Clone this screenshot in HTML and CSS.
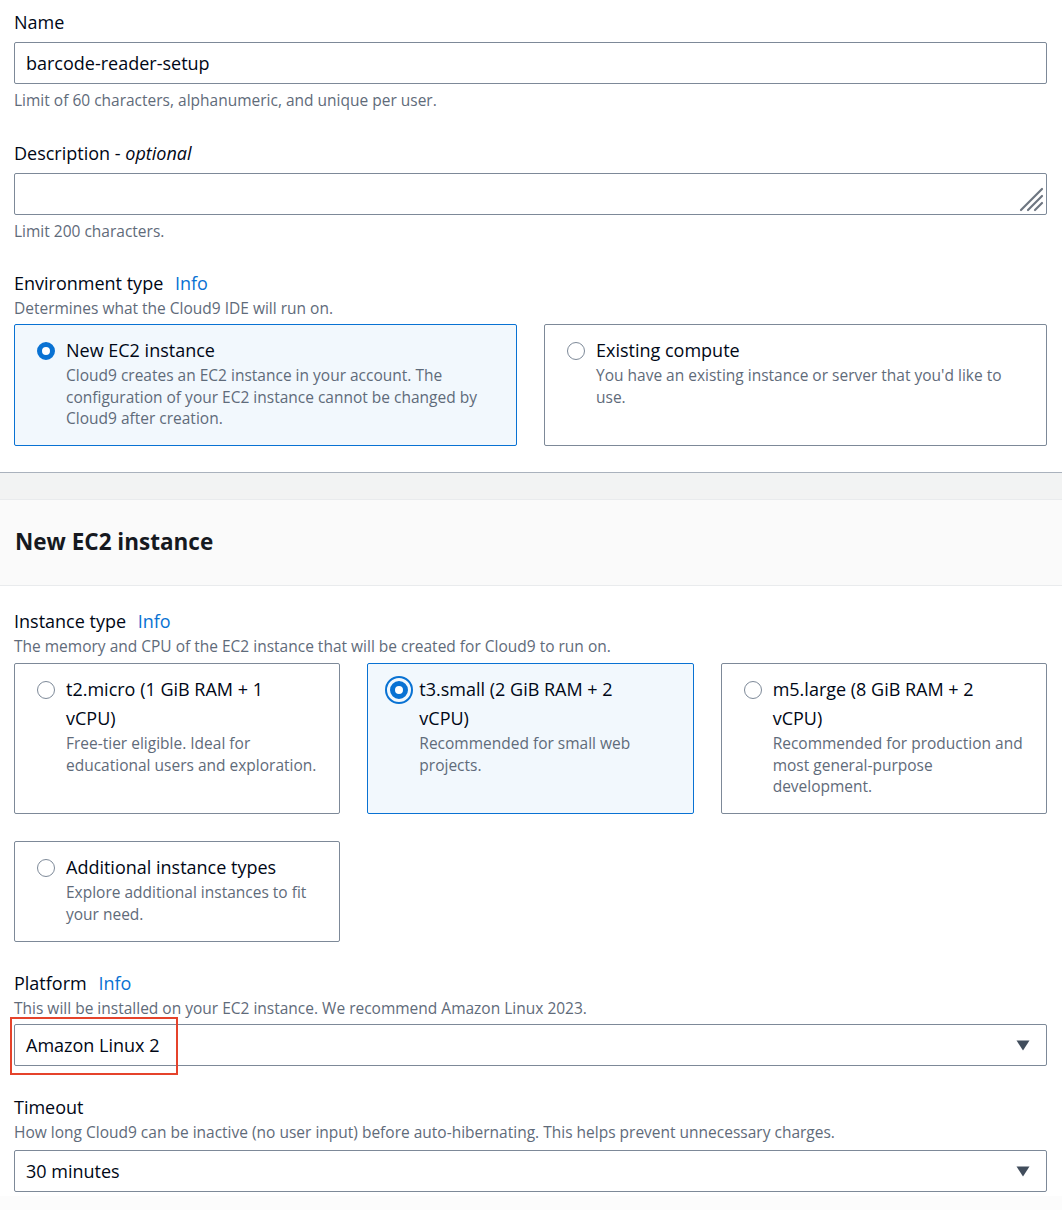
FILE: index.html
```html
<!DOCTYPE html>
<html lang="en">
<head>
<meta charset="utf-8">
<title>Create environment</title>
<link rel="stylesheet" href="styles.css">
</head>
<body>
<div class="page">
  <section class="top">
    <div class="field f-name">
      <div class="label">Name</div>
      <div class="input"><span class="value">barcode-reader-setup</span></div>
      <div class="hint">Limit of 60 characters, alphanumeric, and unique per user.</div>
    </div>

    <div class="field f-desc">
      <div class="label">Description - <i>optional</i></div>
      <div class="textarea">
        <svg class="grip" width="28" height="28" viewBox="0 0 28 28" aria-hidden="true">
          <g stroke="#6e7681" stroke-width="2.2" stroke-linecap="round">
            <line x1="4" y1="25" x2="25" y2="4"/>
            <line x1="11" y1="25" x2="25" y2="11"/>
            <line x1="18" y1="25" x2="25" y2="18"/>
          </g>
        </svg>
      </div>
      <div class="hint">Limit 200 characters.</div>
    </div>

    <div class="field f-env">
      <div class="label">Environment type <a class="info">Info</a></div>
      <div class="desc">Determines what the Cloud9 IDE will run on.</div>
      <div class="tiles tiles-2">
        <div class="tile selected">
          <span class="radio checked"></span>
          <div class="tile-text">
            <div class="tile-title">New EC2 instance</div>
            <div class="tile-desc">Cloud9 creates an EC2 instance in your account. The configuration of your EC2 instance cannot be changed by Cloud9 after creation.</div>
          </div>
        </div>
        <div class="tile">
          <span class="radio"></span>
          <div class="tile-text">
            <div class="tile-title">Existing compute</div>
            <div class="tile-desc">You have an existing instance or server that you'd like to use.</div>
          </div>
        </div>
      </div>
    </div>
  </section>

  <div class="band"></div>

  <header class="cheader">
    <h2>New EC2 instance</h2>
  </header>

  <section class="cbody">
    <div class="field f-itype">
      <div class="label">Instance type <a class="info">Info</a></div>
      <div class="desc">The memory and CPU of the EC2 instance that will be created for Cloud9 to run on.</div>
      <div class="tiles tiles-3">
        <div class="tile tall">
          <span class="radio"></span>
          <div class="tile-text">
            <div class="tile-title">t2.micro (1 GiB RAM + 1 vCPU)</div>
            <div class="tile-desc">Free-tier eligible. Ideal for educational users and exploration.</div>
          </div>
        </div>
        <div class="tile tall selected">
          <span class="radio checked focused"></span>
          <div class="tile-text">
            <div class="tile-title">t3.small (2 GiB RAM + 2 vCPU)</div>
            <div class="tile-desc">Recommended for small web projects.</div>
          </div>
        </div>
        <div class="tile tall">
          <span class="radio"></span>
          <div class="tile-text">
            <div class="tile-title">m5.large (8 GiB RAM + 2 vCPU)</div>
            <div class="tile-desc">Recommended for production and most general-purpose development.</div>
          </div>
        </div>
        <div class="tile short">
          <span class="radio"></span>
          <div class="tile-text">
            <div class="tile-title">Additional instance types</div>
            <div class="tile-desc">Explore additional instances to fit your need.</div>
          </div>
        </div>
      </div>
    </div>

    <div class="field f-platform">
      <div class="label">Platform <a class="info">Info</a></div>
      <div class="desc">This will be installed on your EC2 instance. We recommend Amazon Linux 2023.</div>
      <div class="select annotated">
        <span class="value">Amazon Linux 2</span>
        <svg class="caret" width="14" height="11" viewBox="0 0 14 11" aria-hidden="true"><path d="M0.5 0.5 H13.5 L7 10.5 Z" fill="#414d5c"/></svg>
        <span class="highlight"></span>
      </div>
    </div>

    <div class="field f-timeout">
      <div class="label">Timeout</div>
      <div class="desc">How long Cloud9 can be inactive (no user input) before auto-hibernating. This helps prevent unnecessary charges.</div>
      <div class="select">
        <span class="value">30 minutes</span>
        <svg class="caret" width="14" height="11" viewBox="0 0 14 11" aria-hidden="true"><path d="M0.5 0.5 H13.5 L7 10.5 Z" fill="#414d5c"/></svg>
      </div>
    </div>
  </section>
  <div class="foot"></div>
</div>
</body>
</html>
```

FILE: styles.css
```css
* { box-sizing: border-box; }

html, body {
  margin: 0;
  padding: 0;
  background: #ffffff;
}

body {
  font-family: "Open Sans", "Noto Sans", "Liberation Sans", sans-serif;
  color: #000716;
  -webkit-font-smoothing: antialiased;
}

.page {
  width: 1062px;
  overflow: hidden;
}

.top {
  padding: 10px 15px 0 14px;
}

.cbody {
  padding: 23px 15px 0 14px;
}

.field {
  display: flex;
  flex-direction: column;
}

.label {
  font-size: 18px;
  line-height: 24px;
  color: #000716;
}

.label i {
  font-style: italic;
}

.info {
  color: #0972d3;
  margin-left: 7px;
  font-weight: 500;
  cursor: pointer;
}

.hint,
.desc {
  font-size: 15.5px;
  line-height: 20px;
  color: #5f6b7a;
}

.hint { margin-top: 6px; }
.desc { margin-top: 3px; }

.input,
.textarea,
.select {
  border: 1px solid #7d8998;
  border-radius: 2px;
  background: #fff;
  height: 42px;
  display: flex;
  align-items: center;
  padding: 0 11px;
  font-size: 18px;
  color: #000716;
}

.input { margin-top: 8px; }

.textarea {
  margin-top: 8px;
  height: 42px;
  position: relative;
}

.grip {
  position: absolute;
  right: 1px;
  bottom: 1px;
}

.f-desc { margin-top: 31px; }
.f-desc .hint { margin-top: 6px; }

.f-env { margin-top: 30px; }

.tiles {
  display: grid;
  margin-top: 6px;
}

.f-itype .tiles { margin-top: 7px; }

.tiles-2 {
  grid-template-columns: 1fr 1fr;
  column-gap: 27px;
}

.tiles-3 {
  grid-template-columns: 1fr 1fr 1fr;
  column-gap: 27px;
  row-gap: 27px;
}

.tile {
  border: 1px solid #7d8998;
  border-radius: 2px;
  background: #fff;
  display: flex;
  align-items: flex-start;
  padding: 11px 20px 10px 22px;
  height: 122px;
}

.tile.selected {
  border-color: #0972d3;
  background: #f2f8fd;
}

.tile.tall { height: 151px; }
.tile.short { height: 101px; }

.tile-text {
  margin-left: 11px;
}

.tile-title {
  font-size: 18px;
  line-height: 29px;
  color: #000716;
}

.tiles-3 .tile-title {
  max-width: 232px;
}

.tile-desc {
  font-size: 15.5px;
  line-height: 21.5px;
  color: #5f6b7a;
}

.radio {
  flex: none;
  width: 18px;
  height: 18px;
  margin-top: 6px;
  border-radius: 50%;
  border: 1.5px solid #7d8998;
  background: #fff;
  position: relative;
}

.radio.checked {
  border: 5px solid #0972d3;
}

.radio.focused::after {
  content: "";
  position: absolute;
  left: -10px;
  top: -10px;
  width: 28px;
  height: 28px;
  border-radius: 50%;
  border: 2px solid #0972d3;
  box-sizing: border-box;
}

.band {
  margin-top: 26px;
  border-top: 1px solid #aab2bd;
  background: #f2f3f3;
  height: 27px;
}

.cheader {
  background: #fafafa;
  border-top: 1px solid #e9ebed;
  border-bottom: 1px solid #e9ebed;
  height: 87px;
  display: flex;
  align-items: center;
  padding: 0 15px 2px;
}

.cheader h2 {
  margin: 0;
  font-size: 22.5px;
  line-height: 28px;
  font-weight: 700;
  color: #16191f;
}

.f-platform { margin-top: 29px; }
.f-timeout { margin-top: 29px; }

.select {
  margin-top: 6px;
  justify-content: space-between;
  position: relative;
  padding-right: 16px;
}

.f-timeout .select { margin-top: 8px; }

.highlight {
  position: absolute;
  left: -5px;
  top: -8px;
  width: 168px;
  height: 58px;
  border: 2px solid #e5432b;
  pointer-events: none;
}

.foot {
  margin-top: 4px;
  height: 20px;
  background: #fcfcfc;
}
```
